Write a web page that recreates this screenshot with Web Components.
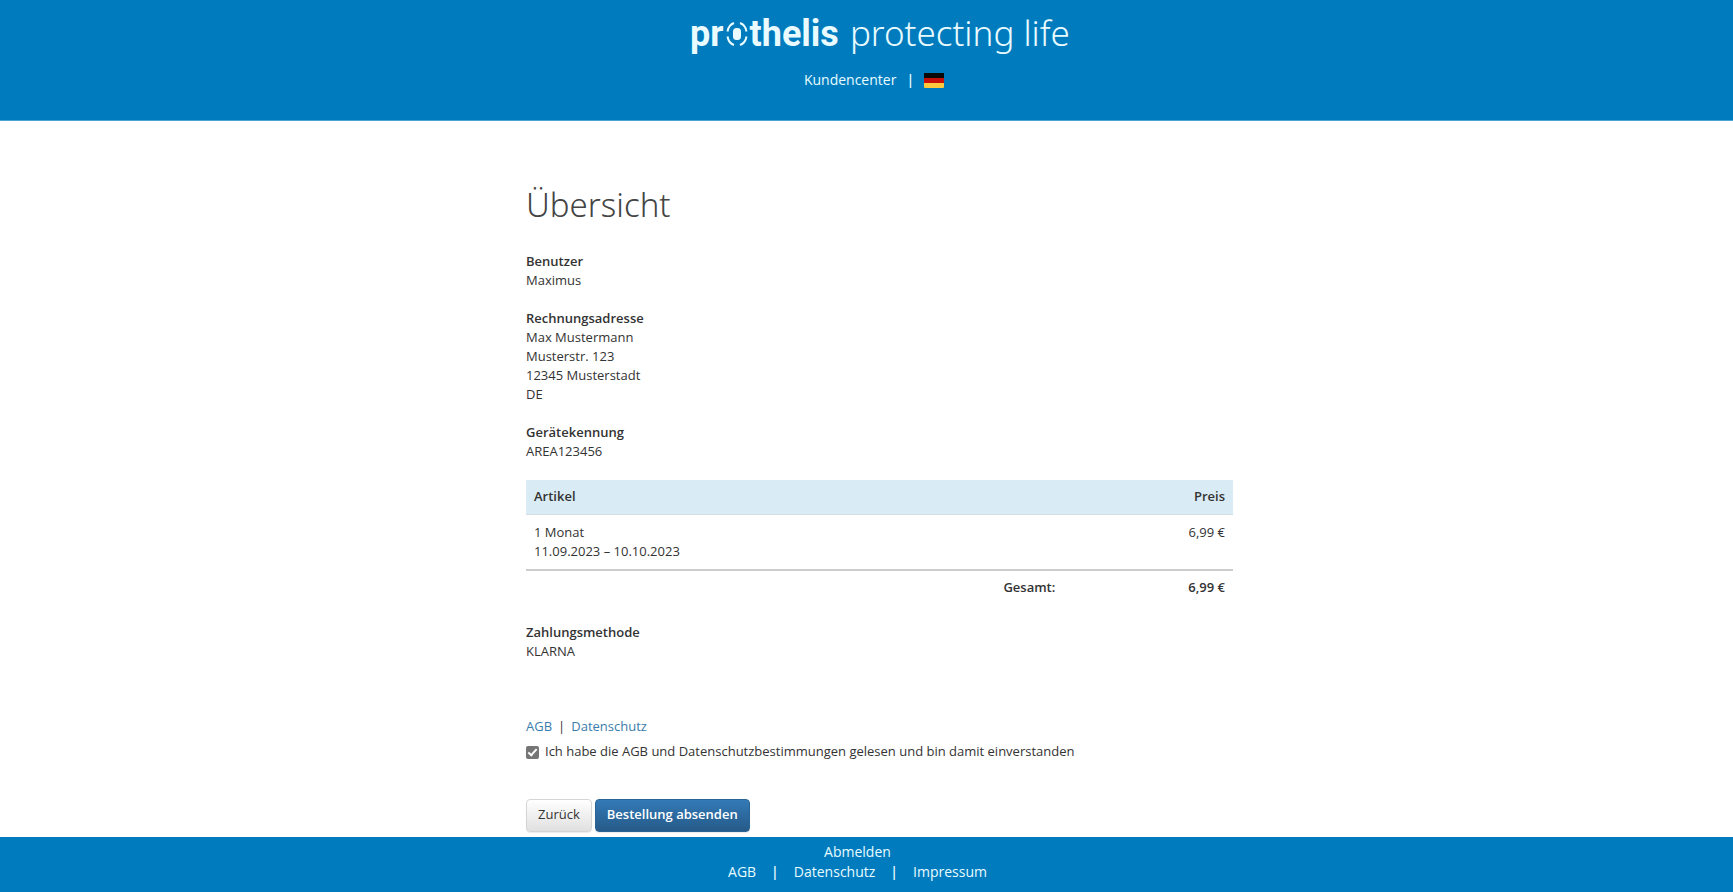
<!DOCTYPE html>
<html lang="de">
<head>
<meta charset="utf-8">
<meta name="viewport" content="width=device-width, initial-scale=1">
<title>Übersicht – prothelis</title>
<style>
  body { margin: 0; background: #fff; color: #333; font: 13px/19px "Open Sans", "Noto Sans", sans-serif; }
</style>
</head>
<body>
<shop-page>
  <shop-header slot="header"></shop-header>
  <info-block heading="Benutzer">Maximus</info-block>
  <info-block heading="Rechnungsadresse">Max Mustermann<br>Musterstr. 123<br>12345 Musterstadt<br>DE</info-block>
  <info-block heading="Gerätekennung">AREA123456</info-block>
  <order-table></order-table>
  <info-block heading="Zahlungsmethode">KLARNA</info-block>
  <order-confirm></order-confirm>
  <shop-footer slot="footer"></shop-footer>
</shop-page>

<script>
const define = (name, html, setup) => customElements.define(name, class extends HTMLElement {
  constructor() {
    super();
    this.attachShadow({ mode: 'open' }).innerHTML = html;
  }
  connectedCallback() { if (setup) setup(this); }
});

define('brand-logo', `
  <style>
    :host { display: flex; align-items: baseline; color: #e9fbff; font-size: 36px; line-height: 46px; white-space: pre; }
    strong { font-family: Roboto, sans-serif; font-weight: 700; }
    span { font-family: "Noto Sans", sans-serif; font-size: 35px; font-weight: 300; margin-left: 11px; }
    svg { width: 22px; height: 26px; margin: 0 2px; align-self: center; }
  </style>
  <strong>pr</strong><svg viewBox="0 0 22 26" role="img" aria-label="o">
    <rect x="7" y="7" width="8" height="12" rx="3.5" fill="currentColor"/>
    <g fill="none" stroke="currentColor" stroke-width="2">
      <path d="M1.500 10.500C2.200 6.200 4.600 3.200 8 2"/><path d="M14 2c3.400 1.200 5.800 4.200 6.500 8.500"/>
      <path d="M1.500 15.500c.7 4.300 3.100 7.300 6.500 8.500"/><path d="M14 24c3.400-1.200 5.800-4.200 6.500-8.500"/>
    </g>
  </svg><strong>thelis</strong><span>protecting life</span>`);

define('shop-header', `
  <style>
    :host { display: flex; flex-direction: column; align-items: center; gap: 13px;
      box-sizing: border-box; min-height: 121px; padding: 10px 0 0 27px; background: #007cbe; border-bottom: 1px solid #4ba3d1; }
    nav { display: flex; align-items: center; gap: 10px; padding-right: 12px; font-size: 14px; line-height: 20px; color: #e9fbff; }
    a { color: inherit; text-decoration: none; }
    nav span { font-weight: 600; }
    svg { display: block; width: 20px; height: 15px; }
  </style>
  <brand-logo></brand-logo>
  <nav aria-label="Kundencenter">
    <a href="#kundencenter">Kundencenter</a><span>|</span>
    <a href="#de" aria-label="Deutsch"><svg viewBox="0 0 20 15">
      <rect width="20" height="15" rx="1" fill="#ffc83d"/><path d="M0 0h20v10H0z" fill="#c8100a"/><path d="M0 0h20v5H0z" fill="#0a0a0a"/>
    </svg></a>
  </nav>`);

define('info-block', `
  <style>
    :host { display: block; margin-bottom: 19px; }
    h2 { margin: 0; font-size: 13px; font-weight: 600; line-height: 19px; }
    p { margin: 0; }
  </style>
  <h2></h2><p><slot></slot></p>`,
  el => { el.shadowRoot.querySelector('h2').textContent = el.getAttribute('heading'); });

define('order-table', `
  <style>
    :host { display: block; margin-bottom: 18px; }
    table { width: 100%; border-collapse: separate; border-spacing: 0; }
    th, td { padding: 8px; text-align: left; vertical-align: top; }
    th { font-weight: 600; }
    thead th { padding-top: 7px; background: #d9ecf5; border-bottom: 1px solid #d5dfe3; }
    tfoot th, tfoot td { padding-top: 7px; border-top: 2px solid #ccc; font-weight: 600; }
    .total { text-align: right; }
    .price { width: 24%; box-sizing: border-box; text-align: right; }
  </style>
  <table>
    <thead><tr><th scope="col" colspan="2">Artikel</th><th scope="col" class="price">Preis</th></tr></thead>
    <tbody><tr><td colspan="2">1 Monat<br>11.09.2023 – 10.10.2023</td><td class="price">6,99 €</td></tr></tbody>
    <tfoot><tr><th scope="row" colspan="2" class="total">Gesamt:</th><td class="price">6,99 €</td></tr></tfoot>
  </table>`);

define('order-confirm', `
  <style>
    :host { display: block; padding-top: 37px; }
    nav { display: flex; gap: 6px; }
    a { color: #3a7cab; text-decoration: none; }
    label { display: flex; align-items: center; gap: 6px; margin-top: 6px; }
    input { appearance: none; width: 13px; height: 13px; margin: 2px 0 0; border-radius: 2px;
      background: #757575; display: grid; place-items: center; }
    input:checked::before { content: ""; width: 7px; height: 3px; border: solid #fff; border-width: 0 0 2px 2px; transform: translateY(-1px) rotate(-48deg); }
    .actions { display: flex; gap: 3px; margin-top: 38px; }
    button { box-sizing: border-box; height: 33px; padding: 0 11px 2px; border: 1px solid #d5d5d5; border-radius: 4px;
      font: inherit; color: #333; background: linear-gradient(#fff, #e0e0e0); box-shadow: 0 1px 1px rgba(0,0,0,.08); }
    .primary { border-color: #2a6496; color: #fff; font-weight: 600; background: linear-gradient(#337ab7, #265a88); }
  </style>
  <nav aria-label="Bestimmungen"><a href="#agb">AGB</a><span>|</span><a href="#datenschutz">Datenschutz</a></nav>
  <label><input type="checkbox" checked>Ich habe die AGB und Datenschutzbestimmungen gelesen und bin damit einverstanden</label>
  <div class="actions"><button type="button">Zurück</button><button type="submit" class="primary">Bestellung absenden</button></div>`);

define('shop-footer', `
  <style>
    :host { display: flex; flex-direction: column; align-items: center; box-sizing: border-box; min-height: 55px;
      padding: 5px 18px 10px 0; background: #007cbe; color: #e9fbff; font-size: 14px; line-height: 20px; }
    nav { display: flex; gap: 15px; }
    a { color: inherit; text-decoration: none; }
    nav span { font-weight: 600; }
  </style>
  <a href="#abmelden">Abmelden</a>
  <nav aria-label="Rechtliches"><a href="#agb">AGB</a><span>|</span><a href="#datenschutz">Datenschutz</a><span>|</span><a href="#impressum">Impressum</a></nav>`);

define('shop-page', `
  <style>
    :host { display: flex; flex-direction: column; min-height: 100vh; }
    main { box-sizing: border-box; width: 100%; max-width: 733px; margin: 0 auto; padding: 60px 0 4px 26px; }
    h1 { margin: 0 0 24px; font: 300 33px/47px "Noto Sans", sans-serif; color: #444; }
    footer { margin-top: auto; }
  </style>
  <slot name="header"></slot>
  <main><h1>Übersicht</h1><slot></slot></main>
  <footer><slot name="footer"></slot></footer>`);
</script>
</body>
</html>
